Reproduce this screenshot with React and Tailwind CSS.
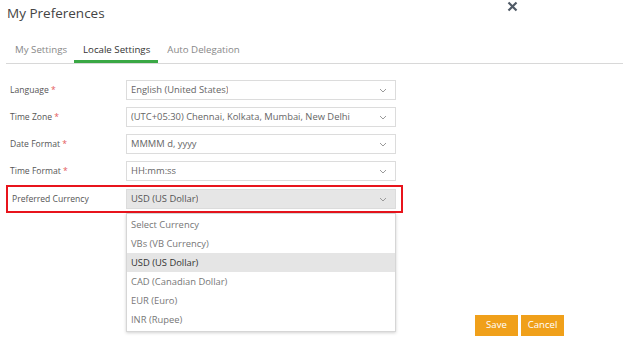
import React from "react";

const fields = [
  { label: "Language", value: "English (United States)", required: true },
  { label: "Time Zone", value: "(UTC+05:30) Chennai, Kolkata, Mumbai, New Delhi", required: true },
  { label: "Date Format", value: "MMMM d, yyyy", required: true },
  { label: "Time Format", value: "HH:mm:ss", required: true },
];

const currencies = [
  "Select Currency",
  "VBs (VB Currency)",
  "USD (US Dollar)",
  "CAD (Canadian Dollar)",
  "EUR (Euro)",
  "INR (Rupee)",
];

const Chevron = () => (
  <svg width="8" height="5" viewBox="0 0 8 5" className="shrink-0">
    <path d="M1 1l3 3 3-3" fill="none" stroke="#9a9a9a" strokeWidth="1" />
  </svg>
);

const Select = ({ value, grey }) => (
  <div
    className={`w-[270px] h-[20px] flex items-center justify-between pl-[4px] pr-[8px] border border-[#dcdcdc] text-[9.4px] ${
      grey ? "bg-[#e6e6e6] text-[#555]" : "bg-white text-[#666]"
    }`}
  >
    <span className="truncate">{value}</span>
    <Chevron />
  </div>
);

const App = () => {
  return (
    <div
      className="w-[625px] h-[341px] bg-white relative overflow-hidden text-[8.6px] text-[#555]"
      style={{ fontFamily: '"Open Sans", "Liberation Sans", sans-serif' }}
    >
      <div className="flex justify-between items-start w-[518px] pl-[7px] pt-[3px]">
        <div className="text-[13.5px] text-[#444] leading-[20px]">My Preferences</div>
        <svg width="11" height="11" viewBox="0 0 11 11" className="mt-[-2px]">
          <path d="M1.5 1.5l8 8M9.5 1.5l-8 8" stroke="#505a66" strokeWidth="2.2" />
        </svg>
      </div>

      <div className="mt-[17px] ml-[6px] mr-[2px] flex h-[24px] border-b border-[#d8d8d8] text-[9.7px]">
        <div className="pl-[9px] pr-[7px] text-[#888] leading-[20px]">My Settings</div>
        <div className="pl-[9px] pr-[8px] text-[#333] leading-[20px] border-b-[3px] border-[#3aa845] h-[23px]">
          Locale Settings
        </div>
        <div className="px-[9px] text-[#888] leading-[20px]">Auto Delegation</div>
      </div>

      <div className="mt-[16px] flex flex-col gap-[7px]">
        {fields.map((f) => (
          <div key={f.label} className="flex items-center pl-[10px] h-[20px]">
            <div className="w-[116px]">
              {f.label} <span className="text-[#e45b5b]">*</span>
            </div>
            <Select value={f.value} />
          </div>
        ))}
      </div>

      <div className="relative mt-[4px] ml-[6px] w-[397px]">
        <div className="flex items-center h-[28px] pl-[2px] border-2 border-[#e8141c]">
          <div className="w-[116px] pl-[2px]">Preferred Currency</div>
          <Select value="USD (US Dollar)" grey />
        </div>
        <div className="absolute left-[120px] top-[28px] w-[270px] bg-white border border-[#d6d6d6] shadow-[0_1px_3px_rgba(0,0,0,0.18)] pt-[1px] pb-[2px] z-10 text-[9.4px]">
          {currencies.map((c) => (
            <div
              key={c}
              className={`h-[19px] leading-[19px] px-[4px] ${
                c === "USD (US Dollar)" ? "bg-[#e5e5e5] text-[#333]" : "text-[#777]"
              }`}
            >
              {c}
            </div>
          ))}
        </div>
      </div>

      <div className="mt-[102px] ml-[475px] flex gap-[3px] text-[9.6px] text-white">
        <button className="w-[43px] h-[21px] bg-[#f0a01a]">Save</button>
        <button className="w-[43px] h-[21px] bg-[#f0a01a]">Cancel</button>
      </div>
    </div>
  );
};

export default App;
